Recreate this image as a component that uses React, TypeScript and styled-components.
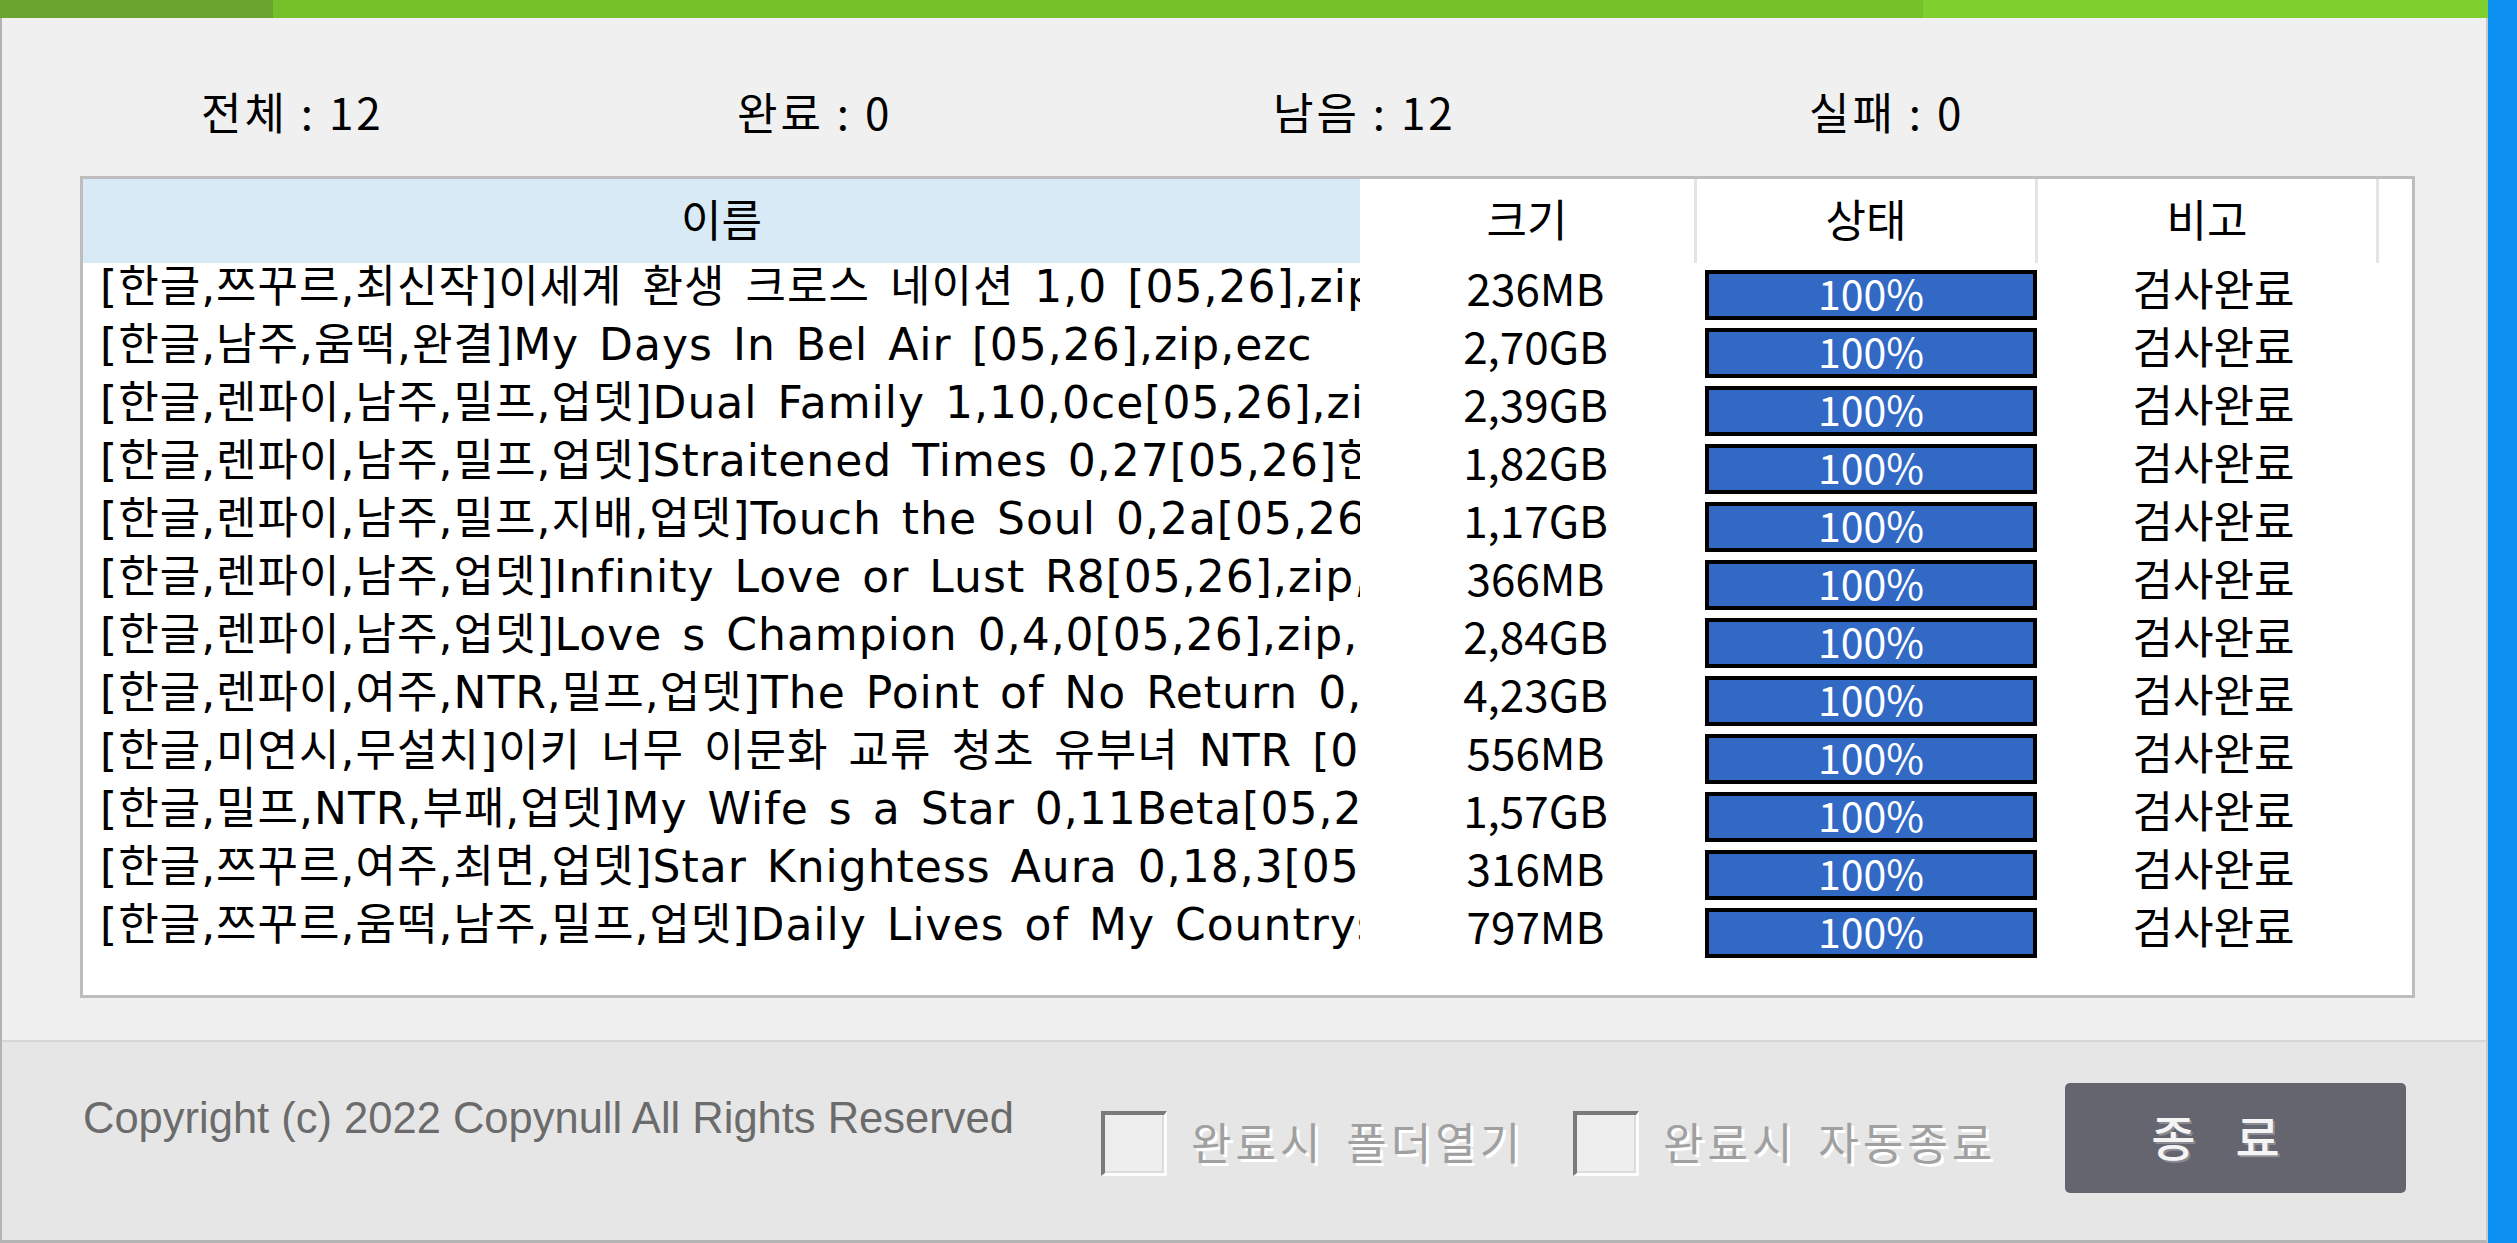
import React from "react";
import styled, { createGlobalStyle } from "styled-components";

const KR = `"Noto Sans CJK KR", "Noto Sans", sans-serif`;
const LIST = `"DejaVu Sans", "Noto Sans CJK KR", sans-serif`;
const COLS = "1277px 337px 341px 341px 1fr";

const GlobalStyle = createGlobalStyle`
  html, body {
    margin: 0;
    padding: 0;
  }
  body {
    background: #0b8ff1;
    overflow: hidden;
  }
`;

const Screen = styled.div`
  width: 2517px;
  height: 1243px;
  display: flex;
`;

const Window = styled.div`
  width: 2488px;
  height: 1243px;
  display: flex;
  flex-direction: column;
  background: #f0f0f0;
  font-family: ${KR};
  color: #000;
`;

const Progress = styled.div`
  display: flex;
  height: 18px;
  flex: none;
`;

const Segment = styled.div<{ $w?: number; $color: string }>`
  flex: ${(p) => (p.$w ? `0 0 ${p.$w}px` : "1")};
  background: ${(p) => p.$color};
`;

const Body = styled.div`
  flex: 1;
  display: flex;
  flex-direction: column;
  border-left: 2px solid #b3b3b3;
  border-right: 2px solid #c9c9c9;
  border-bottom: 3px solid #b4b4b4;
`;

const Stats = styled.div`
  height: 158px;
  box-sizing: border-box;
  padding: 36px 0 0 199px;
  display: grid;
  grid-template-columns: repeat(4, 536px);
  align-items: center;
  font-size: 44px;
  letter-spacing: 3px;
  flex: none;
`;

const Stat = styled.span`
  line-height: 1;
  white-space: pre;
  padding-bottom: 8px;
`;

const Table = styled.div`
  margin-left: 78px;
  width: 2335px;
  height: 822px;
  box-sizing: border-box;
  border: 3px solid #bdbdbd;
  background: #fff;
  overflow: hidden;
  flex: none;
`;

const HeaderRow = styled.div`
  display: grid;
  grid-template-columns: ${COLS};
  height: 84px;
`;

const HeadCell = styled.div<{ $active?: boolean; $sep?: boolean }>`
  display: flex;
  align-items: center;
  justify-content: center;
  box-sizing: border-box;
  background: ${(p) => (p.$active ? "#d9eaf7" : "#fff")};
  border-right: ${(p) => (p.$sep ? "3px solid #e4e4e4" : "none")};
  font-size: 44px;
  line-height: 1;
  padding-bottom: 6px;
`;

const Row = styled.div`
  display: grid;
  grid-template-columns: ${COLS};
  height: 58px;
  font-size: 44px;
`;

const NameCell = styled.div`
  padding: 0 0 10px 17px;
  font-family: ${LIST};
  letter-spacing: 1px;
  word-spacing: 5px;
  white-space: nowrap;
  overflow: hidden;
  line-height: 48px;
`;

const CenterCell = styled.div<{ $shift?: number }>`
  display: flex;
  justify-content: center;
  align-items: center;
  padding-bottom: 10px;
  padding-left: ${(p) => p.$shift ?? 0}px;
  white-space: nowrap;
  line-height: 1;
`;

const BarCell = styled.div`
  display: flex;
  align-items: flex-start;
  padding: 7px 0 0 8px;
`;

const Bar = styled.div`
  width: 332px;
  height: 50px;
  box-sizing: border-box;
  border: 4px solid #000;
  background: #3169c5;
  color: #fff;
  display: flex;
  align-items: center;
  justify-content: center;
  font-size: 41px;
  line-height: 1;
  padding-bottom: 6px;
`;

const Gap = styled.div`
  height: 42px;
  flex: none;
`;

const Footer = styled.div`
  flex: 1;
  border-top: 2px solid #d6d6d6;
  background: #e6e6e6;
  display: flex;
  align-items: flex-start;
  padding-left: 81px;
`;

const Copyright = styled.div`
  flex: 0 0 1018px;
  margin-top: 55px;
  font-family: "Liberation Sans", Arial, sans-serif;
  font-size: 43.5px;
  line-height: 42px;
  color: #6b6b6b;
  white-space: nowrap;
`;

const Option = styled.label<{ $w: number }>`
  flex: 0 0 ${(p) => p.$w}px;
  margin-top: 69px;
  display: flex;
  align-items: center;
  gap: 24px;
`;

const Box = styled.span`
  width: 66px;
  height: 65px;
  box-sizing: border-box;
  border-top: 4px solid #7a7a7a;
  border-left: 4px solid #7a7a7a;
  border-right: 3px solid #fdfdfd;
  border-bottom: 3px solid #fdfdfd;
  background: #eeeeee;
  box-shadow: inset -2px -2px 0 #dcdcdc;
`;

const OptionText = styled.span`
  font-size: 44px;
  line-height: 1;
  letter-spacing: 4px;
  word-spacing: 8px;
  color: #a0a0a0;
  text-shadow: 3px 3px 0 #fff;
  white-space: nowrap;
  padding-bottom: 6px;
`;

const CloseButton = styled.button`
  margin-top: 41px;
  width: 341px;
  height: 110px;
  border: none;
  border-radius: 5px;
  background: #656570;
  color: #f4f4f4;
  font-family: ${KR};
  font-size: 48px;
  font-weight: 500;
  letter-spacing: 40px;
  padding: 0 0 6px 0;
  text-shadow: 2px 2px 0 #8a8a92;
`;

const files = [
  ["[한글,쯔꾸르,최신작]이세계 환생 크로스 네이션 1,0 [05,26],zip,ezc", "236MB"],
  ["[한글,남주,움떡,완결]My Days In Bel Air [05,26],zip,ezc", "2,70GB"],
  ["[한글,렌파이,남주,밀프,업뎃]Dual Family 1,10,0ce[05,26],zip,ezc", "2,39GB"],
  ["[한글,렌파이,남주,밀프,업뎃]Straitened Times 0,27[05,26]한글,zip,ezc", "1,82GB"],
  ["[한글,렌파이,남주,밀프,지배,업뎃]Touch the Soul 0,2a[05,26],zip,ezc", "1,17GB"],
  ["[한글,렌파이,남주,업뎃]Infinity Love or Lust R8[05,26],zip,ezc", "366MB"],
  ["[한글,렌파이,남주,업뎃]Love s Champion 0,4,0[05,26],zip,ezc", "2,84GB"],
  ["[한글,렌파이,여주,NTR,밀프,업뎃]The Point of No Return 0,3[05,26],zip,ezc", "4,23GB"],
  ["[한글,미연시,무설치]이키 너무 이문화 교류 청초 유부녀 NTR [05,26],zip,ezc", "556MB"],
  ["[한글,밀프,NTR,부패,업뎃]My Wife s a Star 0,11Beta[05,26],zip,ezc", "1,57GB"],
  ["[한글,쯔꾸르,여주,최면,업뎃]Star Knightess Aura 0,18,3[05,26],zip,ezc", "316MB"],
  ["[한글,쯔꾸르,움떡,남주,밀프,업뎃]Daily Lives of My Countryside [05,26],zip,ezc", "797MB"],
];

const stats = ["전체 : 12", "완료 : 0", "남음 : 12", "실패 : 0"];

export default function App() {
  return (
    <Screen>
      <GlobalStyle />
      <Window>
        <Progress>
          <Segment $w={273} $color="#69a52d" />
          <Segment $w={1650} $color="#75c12a" />
          <Segment $color="#7fcf2e" />
        </Progress>
        <Body>
          <Stats>
            {stats.map((s) => (
              <Stat key={s}>{s}</Stat>
            ))}
          </Stats>
          <Table>
            <HeaderRow>
              <HeadCell $active>이름</HeadCell>
              <HeadCell $sep>크기</HeadCell>
              <HeadCell $sep>상태</HeadCell>
              <HeadCell $sep>비고</HeadCell>
              <HeadCell />
            </HeaderRow>
            {files.map(([name, size]) => (
              <Row key={name}>
                <NameCell>{name}</NameCell>
                <CenterCell $shift={14}>{size}</CenterCell>
                <BarCell>
                  <Bar>100%</Bar>
                </BarCell>
                <CenterCell $shift={10}>검사완료</CenterCell>
                <div />
              </Row>
            ))}
          </Table>
          <Gap />
          <Footer>
            <Copyright>Copyright (c) 2022 Copynull All Rights Reserved</Copyright>
            <Option $w={472}>
              <Box />
              <OptionText>완료시 폴더열기</OptionText>
            </Option>
            <Option $w={492}>
              <Box />
              <OptionText>완료시 자동종료</OptionText>
            </Option>
            <CloseButton>종료</CloseButton>
          </Footer>
        </Body>
      </Window>
    </Screen>
  );
}
